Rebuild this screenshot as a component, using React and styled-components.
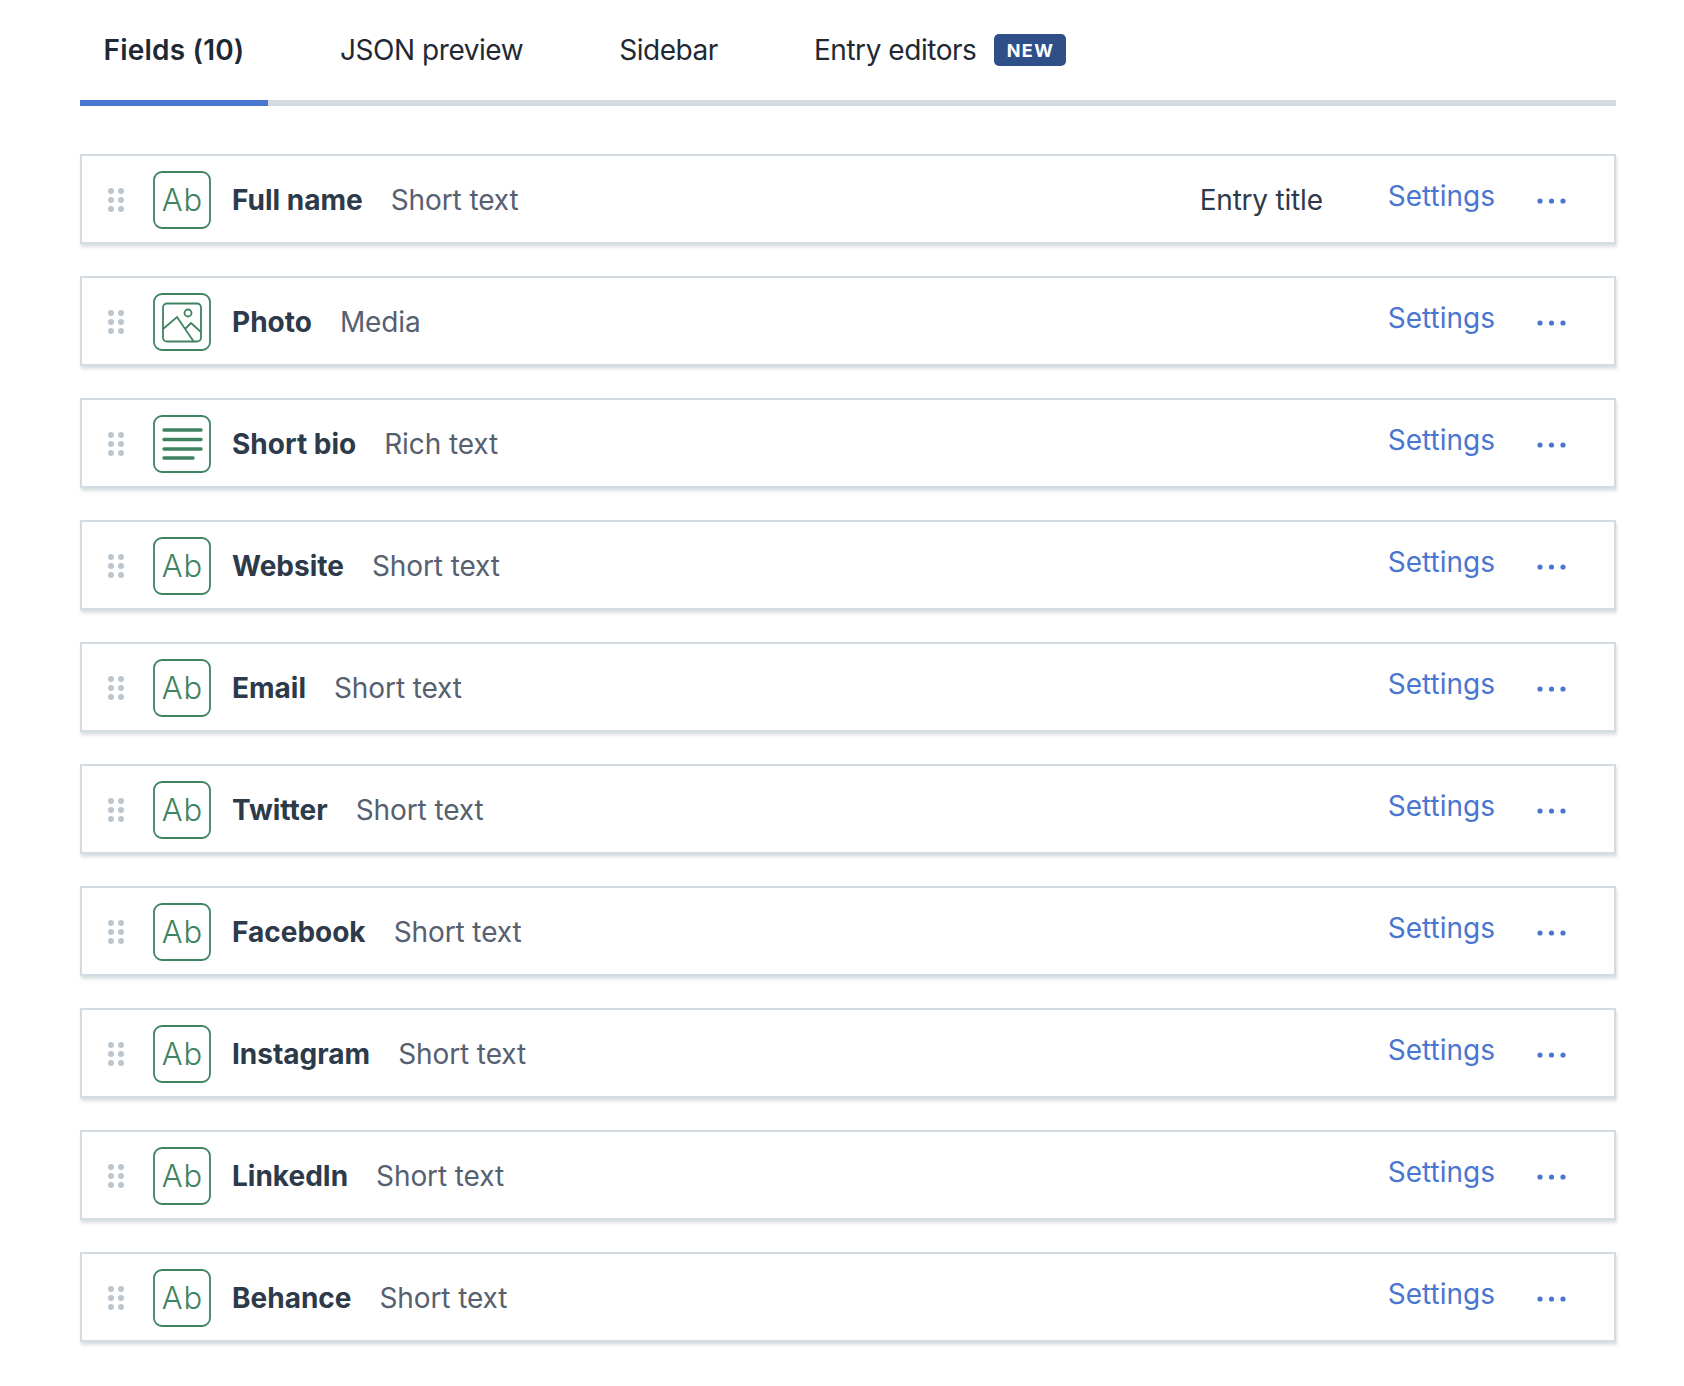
import React from "react";
import styled, { createGlobalStyle } from "styled-components";

const Global = createGlobalStyle`
  html, body { margin: 0; padding: 0; background: #fff; }
  body { font-family: Inter, "Liberation Sans", sans-serif; -webkit-font-smoothing: antialiased; }
`;
const Page = styled.div`
  width: 1684px; height: 1386px; padding: 0 68px 0 80px; box-sizing: border-box; overflow: hidden;
`;
const Tabs = styled.nav`
  display: flex; height: 106px; border-bottom: 6px solid #d3dce0; box-sizing: border-box; margin-bottom: 48px;
`;
const Tab = styled.div`
  display: flex; align-items: center; gap: 18px; height: 106px; box-sizing: border-box;
  padding: 0 ${p => p.$active ? 23.5 : 24}px; margin-right: ${p => p.$gap}px;
  font-size: 28px; letter-spacing: ${p => p.$active ? 0.2 : -0.45}px; color: #1f2933; font-weight: ${p => p.$active ? 600 : 400};
  border-bottom: 6px solid ${p => p.$active ? "#4a76d0" : "transparent"};
`;
const Badge = styled.span`
  display: inline-flex; align-items: center; justify-content: center; width: 72px; height: 32px;
  border-radius: 5px; background: #2e4f87; color: #fff; font-size: 18px; font-weight: 700; letter-spacing: 1.4px;
`;
const List = styled.div` display: flex; flex-direction: column; gap: 32px; `;
const Row = styled.div`
  display: flex; align-items: center; height: 90px; box-sizing: border-box;
  border: 2px solid #d3dce0; background: #fff; box-shadow: 1px 3px 3px rgba(160,175,185,.4);
  padding: 2px 0 0 26px;
`;
const Grip = styled.svg` width: 16px; height: 24px; flex: none; margin-right: 29px; `;
const IconBox = styled.svg` width: 58px; height: 58px; flex: none; margin-right: 21px; display: block; `;
const Name = styled.span` font-size: 28px; font-weight: 700; color: #2d3a4a; margin-right: 28px; `;
const Type = styled.span` font-size: 28px; color: #56606f; letter-spacing: -0.1px; `;
const Spacer = styled.div` flex: 1; `;
const Title = styled.span` font-size: 28px; color: #2d3a4a; margin-right: 65px; letter-spacing: -0.2px; `;
const Settings = styled.a` font-size: 28px; color: #4a76d0; margin-right: 42px; position: relative; top: -4px; `;
const Dots = styled.svg` width: 29px; height: 6px; flex: none; margin-right: 48px; position: relative; top: 1px; `;

const GripIcon = () => (
  <Grip viewBox="0 0 16 24" fill="#bcc6cf">
    {[3, 12, 21].map(y => [3, 13].map(x => <circle key={x + "-" + y} cx={x} cy={y} r="3" />))}
  </Grip>
);
const Frame = ({ children }) => (
  <IconBox viewBox="0 0 58 58" fill="none" stroke="#3f8360" strokeWidth="1.8">
    <rect x="1" y="1" width="56" height="56" rx="8" />
    {children}
  </IconBox>
);
const TextIcon = () => (
  <Frame>
    <text x="29.5" y="40" textAnchor="middle" fontFamily="Inter, sans-serif" fontSize="31" fontWeight="300" letterSpacing="1" fill="#3f8360" stroke="none">Ab</text>
  </Frame>
);
const MediaIcon = () => (
  <Frame>
    <rect x="10" y="10.5" width="38" height="38" rx="4" />
    <path d="M10 36 L24 24 L41 49 M32 36 L38 30 L48 39" />
    <circle cx="35" cy="20" r="3.5" />
  </Frame>
);
const RichIcon = () => (
  <Frame>
    <path strokeWidth="3.4" strokeLinecap="round" d="M11 15 H48 M11 24.5 H48 M11 34 H48 M11 43 H40" />
  </Frame>
);
const Icons = { text: TextIcon, media: MediaIcon, rich: RichIcon };

const fields = [
  ["Full name", "Short text", "text", true],
  ["Photo", "Media", "media"],
  ["Short bio", "Rich text", "rich"],
  ["Website", "Short text", "text"],
  ["Email", "Short text", "text"],
  ["Twitter", "Short text", "text"],
  ["Facebook", "Short text", "text"],
  ["Instagram", "Short text", "text"],
  ["LinkedIn", "Short text", "text"],
  ["Behance", "Short text", "text"],
];

export default function App() {
  return (
    <Page>
      <Global />
      <Tabs>
        <Tab $active $gap={48}>Fields (10)</Tab>
        <Tab $gap={48}>JSON preview</Tab>
        <Tab $gap={48}>Sidebar</Tab>
        <Tab $gap={0}>Entry editors <Badge>NEW</Badge></Tab>
      </Tabs>
      <List>
        {fields.map(([name, type, icon, title]) => {
          const I = Icons[icon];
          return (
            <Row key={name}>
              <GripIcon />
              <I />
              <Name>{name}</Name>
              <Type>{type}</Type>
              <Spacer />
              {title && <Title>Entry title</Title>}
              <Settings>Settings</Settings>
              <Dots viewBox="0 0 29 6" fill="#4a76d0">
                <circle cx="3" cy="3" r="2.6" /><circle cx="14.5" cy="3" r="2.6" /><circle cx="26" cy="3" r="2.6" />
              </Dots>
            </Row>
          );
        })}
      </List>
    </Page>
  );
}
